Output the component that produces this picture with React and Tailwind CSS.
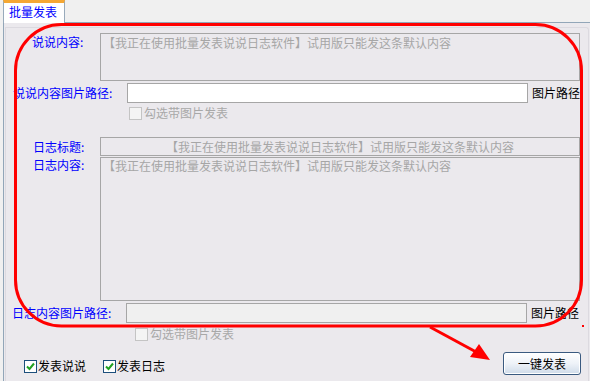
import React from "react";

const font = { fontFamily: '"SimSun", "Noto Sans CJK SC", sans-serif' };

const DEFAULT_TEXT = "【我正在使用批量发表说说日志软件】试用版只能发这条默认内容";

function DisabledCheck({ label, left }) {
  return (
    <div className="flex items-center h-[14px]" style={{ marginLeft: left }}>
      <span className="w-[13px] h-[13px] border border-[#c4c4c4] bg-[#f4f4f4]" />
      <span className="ml-[2px] text-[#a8a8a8] leading-[14px]">{label}</span>
    </div>
  );
}

function CheckedBox({ label }) {
  return (
    <div className="flex items-center h-[14px]">
      <span className="w-[13px] h-[13px] border border-[#1c4f7c] bg-white flex items-center justify-center">
        <svg width="9" height="9" viewBox="0 0 9 9">
          <path d="M1 4.5 L3.5 7 L8 1.5" stroke="#21a121" strokeWidth="2" fill="none" />
        </svg>
      </span>
      <span className="ml-[1px] text-black leading-[14px]">{label}</span>
    </div>
  );
}

export default function App() {
  return (
    <div
      className="relative w-[590px] h-[381px] bg-[#f0f0f0] overflow-hidden text-[12px]"
      style={font}
    >
      {/* tab header */}
      <div className="flex h-[22px] pl-[3px]">
        <div className="w-[62px] h-[23px] bg-white border-t-[3px] border-t-[#f5a732] border-l border-r border-[#98aabb] text-[#0000ff] leading-[16px] pl-[5px] pt-[1px] z-10">
          批量发表
        </div>
      </div>

      {/* panel */}
      <div className="ml-[3px] h-[359px] border-t border-l border-[#92a6b8] bg-[#ebe9ed] pt-[4px] pl-[1px]">
        <div className="h-[354px] border-t border-l border-r border-[#dcdae0] rounded-tr-[3px] mr-[1px] bg-[#ebe9ed]">
          {/* 说说内容 */}
          <div className="flex mt-[5px]">
            <div className="w-[94px] pl-[26px] pt-[2px] text-[#0000ff] leading-[14px]">说说内容:</div>
            <div className="w-[480px] h-[48px] border border-[#a6a6a6] px-[2px] pt-[2px] text-[#a6a6a6] leading-[14px]">
              {DEFAULT_TEXT}
            </div>
          </div>

          {/* 说说内容图片路径 */}
          <div className="flex items-center mt-[2px] h-[20px]">
            <div className="w-[121px] pl-[7px] text-[#0000ff] leading-[14px]">说说内容图片路径:</div>
            <div className="w-[401px] h-[20px] border border-[#a6a6a6] bg-white" />
            <div className="ml-[4px] text-black leading-[14px]">图片路径</div>
          </div>

          <div className="mt-[3px]">
            <DisabledCheck label="勾选带图片发表" left={123} />
          </div>

          {/* 日志标题 */}
          <div className="flex items-center mt-[17px]">
            <div className="w-[94px] pl-[27px] text-[#0000ff] leading-[14px]">日志标题:</div>
            <div className="w-[480px] h-[19px] border border-[#a6a6a6] text-center text-[#a6a6a6] leading-[17px]">
              {DEFAULT_TEXT}
            </div>
          </div>

          {/* 日志内容 */}
          <div className="flex mt-[1px]">
            <div className="w-[94px] pl-[27px] pt-[1px] text-[#0000ff] leading-[14px]">日志内容:</div>
            <div className="w-[480px] h-[144px] border border-[#a6a6a6] px-[2px] pt-[1px] text-[#a6a6a6] leading-[14px]">
              {DEFAULT_TEXT}
            </div>
          </div>

          {/* 日志内容图片路径 */}
          <div className="flex items-center mt-[2px] h-[20px]">
            <div className="w-[120px] pl-[6px] text-[#0000ff] leading-[14px]">日志内容图片路径:</div>
            <div className="w-[401px] h-[20px] border border-[#a6a6a6] bg-[#f0f0f0]" />
            <div className="ml-[4px] text-black leading-[14px]">图片路径</div>
          </div>

          <div className="mt-[4px]">
            <DisabledCheck label="勾选带图片发表" left={129} />
          </div>

          {/* bottom bar */}
          <div className="flex items-start mt-[11px] h-[23px]">
            <div className="ml-[18px] mt-[7px]">
              <CheckedBox label="发表说说" />
            </div>
            <div className="ml-[17px] mt-[7px]">
              <CheckedBox label="发表日志" />
            </div>
            <button className="ml-auto mr-[7px] w-[78px] h-[23px] border border-[#3a5a80] rounded-[3px] bg-gradient-to-b from-[#ffffff] via-[#eef2f8] to-[#cfdbe9] text-black leading-[14px] shadow-[inset_0_0_0_1px_#ffffff]">
              一键发表
            </button>
          </div>
        </div>
      </div>

      {/* red annotation */}
      <svg
        className="absolute left-0 top-0 pointer-events-none"
        width="590"
        height="381"
        viewBox="0 0 590 381"
      >
        <rect x="15.5" y="24.5" width="566" height="301.5" rx="46" ry="46" fill="none" stroke="#ff0000" strokeWidth="3" />
        <line x1="430" y1="327" x2="478" y2="353" stroke="#ff0000" strokeWidth="3" />
        <polygon points="490,360 470,357 479,344" fill="#ff0000" />
        <rect x="582" y="325" width="2" height="2" fill="#ff0000" />
      </svg>
    </div>
  );
}
